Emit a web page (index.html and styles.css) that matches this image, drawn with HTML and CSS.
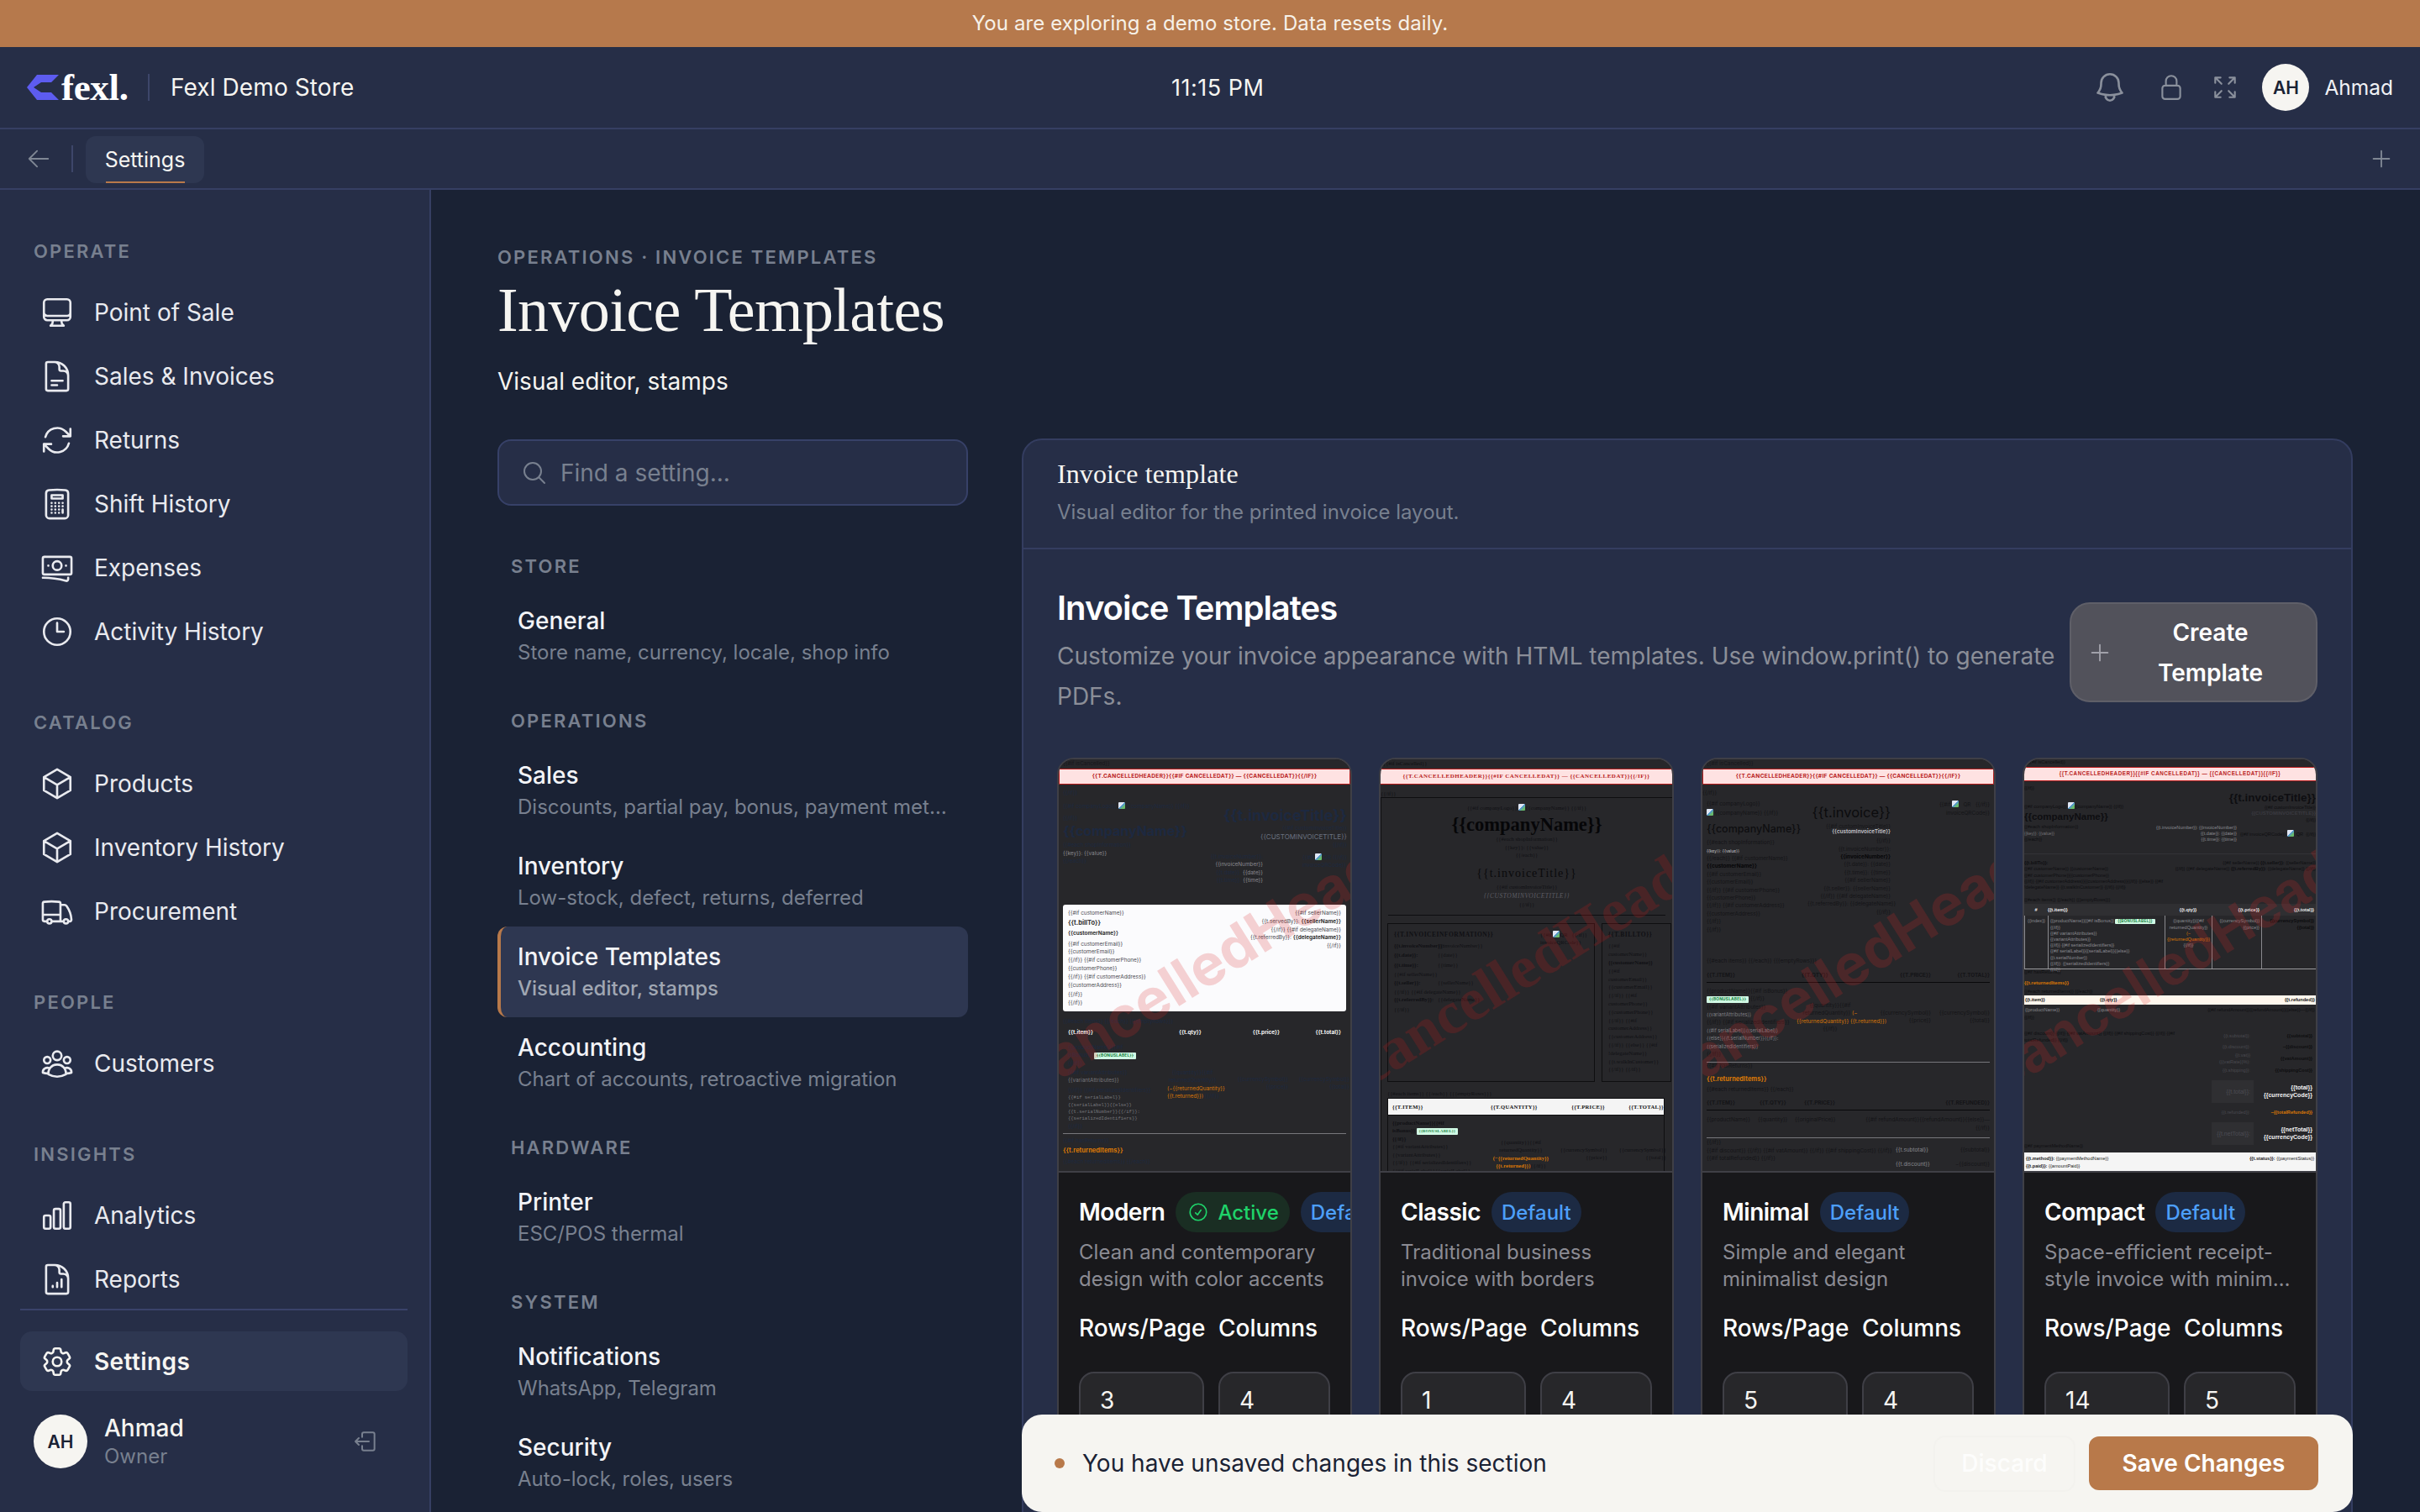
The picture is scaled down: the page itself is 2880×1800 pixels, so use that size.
FILE: index.html
```html
<!DOCTYPE html>
<html lang="en">
  <head>
    <meta charset="UTF-8" />
    <title>Invoice Templates - Fexl Demo Store</title>
    <link rel="stylesheet" href="styles.css">
  </head>
  <body>
    <div class="banner">You are exploring a demo store. Data resets daily.</div>

    <header class="topbar">
      <div class="brand">
        <svg class="brand-mark" viewBox="0 0 38 30"><path d="M12 0h26l-9 9H17l-9 6 9 6h12l9 9H12L0 15z" fill="#5d5cf0"/><path d="M9 15l7-4h13l-4 4z" fill="#262e47"/></svg>
        <span class="brand-name">fexl.</span>
      </div>
      <div class="store">Fexl Demo Store</div>
      <div class="clock">11:15 PM</div>
      <div class="top-actions">
        <svg class="ico bell" viewBox="0 0 24 24"><path d="M14.857 17.082a23.848 23.848 0 0 0 5.454-1.31A8.967 8.967 0 0 1 18 9.75V9A6 6 0 0 0 6 9v.75a8.967 8.967 0 0 1-2.312 6.022c1.733.64 3.56 1.085 5.455 1.31m5.714 0a24.255 24.255 0 0 1-5.714 0m5.714 0a3 3 0 1 1-5.714 0"/></svg>
        <svg class="ico lock" viewBox="0 0 24 24"><path d="M16.5 10.5V6.75a4.5 4.5 0 1 0-9 0v3.75m-.75 11.25h10.5a2.25 2.25 0 0 0 2.25-2.25v-6.75a2.25 2.25 0 0 0-2.25-2.25H6.75a2.25 2.25 0 0 0-2.25 2.25v6.75a2.25 2.25 0 0 0 2.25 2.25Z"/></svg>
        <svg class="ico expand" viewBox="0 0 24 24"><path d="M3.75 3.75v4.5m0-4.5h4.5m-4.5 0L9 9M3.75 20.25v-4.5m0 4.5h4.5m-4.5 0L9 15M20.25 3.75h-4.5m4.5 0v4.5m0-4.5L15 9m5.25 11.25h-4.5m4.5 0v-4.5m0 4.5L15 15"/></svg>
        <div class="avatar">AH</div>
        <span class="user-name">Ahmad</span>
      </div>
    </header>

    <div class="tabbar">
      <svg class="ico tab-back" viewBox="0 0 24 24"><path d="M10.5 19.5 3 12m0 0 7.5-7.5M3 12h18"/></svg>
      <span class="tab-sep"></span>
      <div class="tab">Settings</div>
      <svg class="ico tab-add" viewBox="0 0 24 24"><path d="M12 4.5v15m7.5-7.5h-15"/></svg>
    </div>

    <div class="shell">
      <aside class="sidebar">
        <nav class="side-nav">
          <div class="side-label">OPERATE</div>
          <a class="side-item"><svg class="ico" viewBox="0 0 24 24"><path d="M9 17.25v1.007a3 3 0 0 1-.879 2.122L7.5 21h9l-.621-.621A3 3 0 0 1 15 18.257V17.25m6-12V15a2.25 2.25 0 0 1-2.25 2.25H5.25A2.25 2.25 0 0 1 3 15V5.25m18 0A2.25 2.25 0 0 0 18.75 3H5.25A2.25 2.25 0 0 0 3 5.25m18 0V12a2.25 2.25 0 0 1-2.25 2.25H5.25A2.25 2.25 0 0 1 3 12V5.25"/></svg>Point of Sale</a>
          <a class="side-item"><svg class="ico" viewBox="0 0 24 24"><path d="M19.5 14.25v-2.625a3.375 3.375 0 0 0-3.375-3.375h-1.5A1.125 1.125 0 0 1 13.5 7.125v-1.5a3.375 3.375 0 0 0-3.375-3.375H8.25m0 12.75h7.5m-7.5 3H12M10.5 2.25H5.625c-.621 0-1.125.504-1.125 1.125v17.25c0 .621.504 1.125 1.125 1.125h12.75c.621 0 1.125-.504 1.125-1.125V11.25a9 9 0 0 0-9-9Z"/></svg>Sales &amp; Invoices</a>
          <a class="side-item"><svg class="ico" viewBox="0 0 24 24"><path d="M16.023 9.348h4.992v-.001M2.985 19.644v-4.992m0 0h4.992m-4.993 0 3.181 3.183a8.25 8.25 0 0 0 13.803-3.7M4.031 9.865a8.25 8.25 0 0 1 13.803-3.7l3.181 3.182m0-4.991v4.99"/></svg>Returns</a>
          <a class="side-item"><svg class="ico" viewBox="0 0 24 24"><path d="M15.75 15.75V18m-7.5-6.75h.008v.008H8.25v-.008Zm0 2.25h.008v.008H8.25V13.5Zm0 2.25h.008v.008H8.25v-.008Zm0 2.25h.008v.008H8.25V18Zm2.498-6.75h.007v.008h-.007v-.008Zm0 2.25h.007v.008h-.007V13.5Zm0 2.25h.007v.008h-.007v-.008Zm0 2.25h.007v.008h-.007V18Zm2.504-6.75h.008v.008h-.008v-.008Zm0 2.25h.008v.008h-.008V13.5Zm0 2.25h.008v.008h-.008v-.008Zm0 2.25h.008v.008h-.008V18Zm2.498-6.75h.008v.008h-.008v-.008Zm0 2.25h.008v.008h-.008V13.5ZM8.25 6h7.5v2.25h-7.5V6ZM12 2.25c-1.892 0-3.758.11-5.593.322C5.307 2.7 4.5 3.65 4.5 4.757V19.5a2.25 2.25 0 0 0 2.25 2.25h10.5a2.25 2.25 0 0 0 2.25-2.25V4.757c0-1.108-.806-2.057-1.907-2.185A48.507 48.507 0 0 0 12 2.25Z"/></svg>Shift History</a>
          <a class="side-item"><svg class="ico" viewBox="0 0 24 24"><path d="M2.25 18.75a60.07 60.07 0 0 1 15.797 2.101c.727.198 1.453-.342 1.453-1.096V18.75M3.750 4.5h16.875c.621 0 1.125.504 1.125 1.125v9.75c0 .621-.504 1.125-1.125 1.125H3.375a1.125 1.125 0 0 1-1.125-1.125v-9.75C2.250 5.004 2.754 4.5 3.375 4.5M15 10.5a3 3 0 1 1-6 0 3 3 0 0 1 6 0Zm3 0h.008v.008H18V10.5Zm-12 0h.008v.008H6V10.5Z"/></svg>Expenses</a>
          <a class="side-item"><svg class="ico" viewBox="0 0 24 24"><path d="M12 6v6h4.5m4.5 0a9 9 0 1 1-18 0 9 9 0 0 1 18 0Z"/></svg>Activity History</a>

          <div class="side-label">CATALOG</div>
          <a class="side-item"><svg class="ico" viewBox="0 0 24 24"><path d="m21 7.5-9-5.25L3 7.5m18 0-9 5.25m9-5.25v9l-9 5.25M3 7.5l9 5.25M3 7.5v9l9 5.25m0-9v9"/></svg>Products</a>
          <a class="side-item"><svg class="ico" viewBox="0 0 24 24"><path d="m21 7.5-9-5.25L3 7.5m18 0-9 5.25m9-5.25v9l-9 5.25M3 7.5l9 5.25M3 7.5v9l9 5.25m0-9v9"/></svg>Inventory History</a>
          <a class="side-item"><svg class="ico" viewBox="0 0 24 24"><path d="M8.25 18.75a1.5 1.5 0 0 1-3 0m3 0a1.5 1.5 0 0 0-3 0m3 0h6m-9 0H3.375a1.125 1.125 0 0 1-1.125-1.125V14.25m17.25 4.5a1.5 1.5 0 0 1-3 0m3 0a1.5 1.5 0 0 0-3 0m3 0h1.125c.621 0 1.129-.504 1.09-1.124a17.902 17.902 0 0 0-3.213-9.193 2.056 2.056 0 0 0-1.58-.86H14.25M16.5 18.75h-2.25m0-11.177v-.958c0-.568-.422-1.048-.987-1.106a48.554 48.554 0 0 0-10.026 0 1.106 1.106 0 0 0-.987 1.106v7.635m12-6.677v6.677m0 4.5v-4.5m0 0h-12"/></svg>Procurement</a>

          <div class="side-label">PEOPLE</div>
          <a class="side-item"><svg class="ico" viewBox="0 0 24 24"><path d="M18 18.72a9.094 9.094 0 0 0 3.741-.479 3 3 0 0 0-4.682-2.72m.94 3.198.001.031c0 .225-.012.447-.037.666A11.944 11.944 0 0 1 12 21c-2.17 0-4.207-.576-5.963-1.584A6.062 6.062 0 0 1 6 18.719m12 0a5.971 5.971 0 0 0-.941-3.197m0 0A5.995 5.995 0 0 0 12 12.75a5.995 5.995 0 0 0-5.058 2.772m0 0a3 3 0 0 0-4.681 2.72 8.986 8.986 0 0 0 3.74.477m.94-3.197a5.971 5.971 0 0 0-.94 3.197M15 6.75a3 3 0 1 1-6 0 3 3 0 0 1 6 0Zm6 3a2.25 2.25 0 1 1-4.5 0 2.25 2.25 0 0 1 4.5 0Zm-13.5 0a2.25 2.25 0 1 1-4.5 0 2.25 2.25 0 0 1 4.5 0Z"/></svg>Customers</a>

          <div class="side-label">INSIGHTS</div>
          <a class="side-item"><svg class="ico" viewBox="0 0 24 24"><path d="M3 13.125C3 12.504 3.504 12 4.125 12h2.25c.621 0 1.125.504 1.125 1.125v6.75C7.5 20.496 6.996 21 6.375 21h-2.25A1.125 1.125 0 0 1 3 19.875v-6.75ZM9.75 8.625c0-.621.504-1.125 1.125-1.125h2.25c.621 0 1.125.504 1.125 1.125v11.25c0 .621-.504 1.125-1.125 1.125h-2.25a1.125 1.125 0 0 1-1.125-1.125V8.625ZM16.5 4.125c0-.621.504-1.125 1.125-1.125h2.25C20.496 3 21 3.504 21 4.125v15.75c0 .621-.504 1.125-1.125 1.125h-2.25a1.125 1.125 0 0 1-1.125-1.125V4.125Z"/></svg>Analytics</a>
          <a class="side-item"><svg class="ico" viewBox="0 0 24 24"><path d="M19.5 14.25v-2.625a3.375 3.375 0 0 0-3.375-3.375h-1.5A1.125 1.125 0 0 1 13.5 7.125v-1.5a3.375 3.375 0 0 0-3.375-3.375H8.25M9 16.5v.75m3-3v3M15 12v5.25m-4.5-15H5.625c-.621 0-1.125.504-1.125 1.125v17.25c0 .621.504 1.125 1.125 1.125h12.75c.621 0 1.125-.504 1.125-1.125V11.25a9 9 0 0 0-9-9Z"/></svg>Reports</a>
        </nav>
        <div class="side-foot">
          <a class="side-item active"><svg class="ico" viewBox="0 0 24 24"><path d="M9.594 3.94c.09-.542.56-.94 1.11-.94h2.593c.55 0 1.02.398 1.11.94l.213 1.281c.063.374.313.686.645.87.074.04.147.083.22.127.325.196.72.257 1.075.124l1.217-.456a1.125 1.125 0 0 1 1.37.49l1.296 2.247a1.125 1.125 0 0 1-.26 1.431l-1.003.827c-.293.241-.438.613-.43.992a7.723 7.723 0 0 1 0 .255c-.008.378.137.75.43.991l1.004.827c.424.35.534.955.26 1.43l-1.298 2.247a1.125 1.125 0 0 1-1.369.491l-1.217-.456c-.355-.133-.75-.072-1.076.124a6.47 6.47 0 0 1-.22.128c-.331.183-.581.495-.644.869l-.213 1.281c-.09.543-.56.94-1.11.94h-2.594c-.55 0-1.019-.398-1.11-.94l-.213-1.281c-.062-.374-.312-.686-.644-.87a6.52 6.52 0 0 1-.22-.127c-.325-.196-.72-.257-1.076-.124l-1.217.456a1.125 1.125 0 0 1-1.369-.49l-1.297-2.247a1.125 1.125 0 0 1 .26-1.431l1.004-.827c.292-.24.437-.613.43-.991a6.932 6.932 0 0 1 0-.255c.007-.38-.138-.751-.43-.992l-1.004-.827a1.125 1.125 0 0 1-.26-1.43l1.297-2.247a1.125 1.125 0 0 1 1.37-.491l1.216.456c.356.133.751.072 1.076-.124.072-.044.146-.086.22-.128.332-.183.582-.495.644-.869l.214-1.28Z"/><path d="M15 12a3 3 0 1 1-6 0 3 3 0 0 1 6 0Z"/></svg>Settings</a>
          <div class="side-user">
            <div class="avatar big">AH</div>
            <div class="side-user-text">
              <div class="side-user-name">Ahmad</div>
              <div class="side-user-role">Owner</div>
            </div>
            <svg class="ico logout" viewBox="0 0 24 24"><path d="M9 8V5.5A1.5 1.5 0 0 1 10.5 4h8A1.5 1.5 0 0 1 20 5.5v13a1.5 1.5 0 0 1-1.5 1.5h-8A1.5 1.5 0 0 1 9 18.500V16M15 12H3m0 0 3-3m-3 3 3 3"/></svg>
          </div>
        </div>
      </aside>

      <main class="main">
        <div class="crumb">OPERATIONS · INVOICE TEMPLATES</div>
        <h1 class="title">Invoice Templates</h1>
        <p class="subtitle">Visual editor, stamps</p>

        <div class="settings">
          <div class="menu">
            <div class="search">
              <svg class="ico" viewBox="0 0 24 24"><path d="m21 21-5.197-5.197m0 0A7.5 7.5 0 1 0 5.196 5.196a7.5 7.5 0 0 0 10.607 10.607Z"/></svg>
              <span>Find a setting...</span>
            </div>
            <div class="menu-label first">STORE</div>
            <a class="menu-item"><b>General</b><span>Store name, currency, locale, shop info</span></a>
            <div class="menu-label">OPERATIONS</div>
            <a class="menu-item"><b>Sales</b><span>Discounts, partial pay, bonus, payment methods and more</span></a>
            <a class="menu-item"><b>Inventory</b><span>Low-stock, defect, returns, deferred</span></a>
            <a class="menu-item active"><b>Invoice Templates</b><span>Visual editor, stamps</span></a>
            <a class="menu-item"><b>Accounting</b><span>Chart of accounts, retroactive migration</span></a>
            <div class="menu-label">HARDWARE</div>
            <a class="menu-item"><b>Printer</b><span>ESC/POS thermal</span></a>
            <div class="menu-label">SYSTEM</div>
            <a class="menu-item"><b>Notifications</b><span>WhatsApp, Telegram</span></a>
            <a class="menu-item"><b>Security</b><span>Auto-lock, roles, users</span></a>
          </div>

          <section class="panel">
            <div class="panel-head">
              <h3>Invoice template</h3>
              <p>Visual editor for the printed invoice layout.</p>
            </div>
            <div class="panel-body">
              <div class="tpl-head">
                <div class="tpl-head-text">
                  <h2>Invoice Templates</h2>
                  <p>Customize your invoice appearance with HTML templates. Use window.print() to generate PDFs.</p>
                </div>
                <button class="create">
                  <svg class="ico" viewBox="0 0 24 24"><path d="M12 4.5v15m7.5-7.5h-15"/></svg>
                  <span>Create Template</span>
                </button>
              </div>

              <div class="cards">
                <!-- modern -->
                <article class="card">
                  <div class="pv pv-modern">
                    <div class="pv-if">{{#if isCancelled}}</div>
                    <div class="pv-cancel">{{T.CANCELLEDHEADER}}{{#IF CANCELLEDAT}} — {{CANCELLEDAT}}{{/IF}}</div>
                    <div class="m-head">
                      <div class="m-left">
                        <p>{{/if}}</p>
                        <p class="m-logo">{{#if companyLogo}} <i class="broken"></i> {{companyName}} {{/if}}</p>
                        <p>{{/if}}</p>
                        <p class="m-company">{{companyName}}</p>
                        <p>{{#each shopInformation}}</p>
                        <p class="grey">{{key}}: {{value}}</p>
                        <p>{{/each}}</p>
                      </div>
                      <div class="m-right">
                        <p class="m-title">{{t.invoiceTitle}}</p>
                        <p>{{#if customInvoiceTitle}}</p>
                        <p class="m-custom">{{CUSTOMINVOICETITLE}}</p>
                        <p>{{/if}}</p>
                        <div class="m-info">
                          <div class="m-lines">
                            <p>{{t.invoiceNumber}}:</p>
                            <p class="grey">{{invoiceNumber}}</p>
                            <p>{{t.date}}: <span class="grey">{{date}}</span></p>
                            <p>{{t.time}}: <span class="grey">{{time}}</span></p>
                          </div>
                          <div class="m-qr">
                            <p>{{#if <i class="broken"></i> QR {{/if}}</p>
                            <p>invoiceQRCode}}</p>
                          </div>
                        </div>
                      </div>
                    </div>
                    <div class="m-box">
                      <div>
                        <p>{{#if customerName}}</p>
                        <p class="m-billto">{{t.billTo}}</p>
                        <p class="m-name">{{customerName}}</p>
                        <p>{{#if customerEmail}}</p>
                        <p>{{customerEmail}}</p>
                        <p>{{/if}} {{#if customerPhone}}</p>
                        <p>{{customerPhone}}</p>
                        <p>{{/if}} {{#if customerAddress}}</p>
                        <p>{{customerAddress}}</p>
                        <p class="m-gap">{{/if}}</p>
                        <p>{{/if}}</p>
                      </div>
                      <div class="m-box-right">
                        <p>{{#if sellerName}}</p>
                        <p>{{t.servedBy}}: <b>{{sellerName}}</b></p>
                        <p>{{/if}} {{#if delegateName}}</p>
                        <p>{{t.referredBy}}: <b>{{delegateName}}</b></p>
                        <p>{{/if}}</p>
                      </div>
                    </div>
                    <p class="m-each">{{#each items}} {{/each}} {{{emptyRows}}}</p>
                    <div class="m-th"><span>{{t.item}}</span><span>{{t.qty}}</span><span>{{t.price}}</span><span>{{t.total}}</span></div>
                    <div class="m-row">
                      <div class="m-prod">
                        <p>{{productName}}{{#if</p>
                        <p>isBonus}} <i class="bonus">{{BONUSLABEL}}</i></p>
                        <p>{{/if}}</p>
                        <p class="m-vgap">{{#if variantAttributes}}</p>
                        <p class="grey">{{variantAttributes}}</p>
                        <p class="m-vgap">{{/if}} {{#if serializedIdentifiers}}</p>
                        <p class="mono">{{#if serialLabel}}</p>
                        <p class="mono">{{serialLabel}}{{else}}</p>
                        <p class="mono">{{t.serialNumber}}{{/if}}:</p>
                        <p class="mono">{{serializedIdentifiers}}</p>
                        <p>{{/if}}</p>
                      </div>
                      <div class="m-qty">
                        <p>{{quantity}}{{#if</p>
                        <p>returnedQuantity}}</p>
                        <p class="orange">(−{{returnedQuantity}}</p>
                        <p class="orange">{{t.returned}}) <span class="dk">{{/if}}</span></p>
                      </div>
                      <div class="m-cur"><p>{{currencySymbol}}</p><p>{{price}}</p></div>
                      <div class="m-cur"><p>{{currencySymbol}}</p><p>{{total}}</p></div>
                    </div>
                    <div class="m-rule"></div>
                    <p class="m-each2">{{#if hasReturns}}</p>
                    <p class="m-returned">{{t.returnedItems}}</p>
                    <p class="m-each2">{{#each returnedItems}} {{/each}}</p>
                    <div class="wm">{{t.cancelledHeader}}</div>
                  </div>
                  <div class="card-body">
                    <div class="card-name"><b>Modern</b><span class="pill green"><svg class="ico" viewBox="0 0 24 24"><path d="M9 12.75 11.25 15 15 9.75M21 12a9 9 0 1 1-18 0 9 9 0 0 1 18 0Z"/></svg>Active</span><span class="pill blue">Default</span></div>
                    <p class="card-desc">Clean and contemporary design with color accents</p>
                    <div class="fields">
                      <div class="field"><label>Rows/Page</label><div class="num">3</div></div>
                      <div class="field"><label>Columns</label><div class="num">4</div></div>
                    </div>
                  </div>
                </article>

                <!-- classic -->
                <article class="card">
                  <div class="pv pv-classic">
                    <div class="pv-if">{{#if isCancelled}}</div>
                    <div class="pv-cancel">{{T.CANCELLEDHEADER}}{{#IF CANCELLEDAT}} — {{CANCELLEDAT}}{{/IF}}</div>
                    <p class="c-endif">{{/if}}</p>
                    <div class="c-frame">
                      <div class="c-top">
                        <p>{{#if companyLogo}} <i class="broken"></i>{{companyName}} {{/if}}</p>
                        <p class="c-company">{{companyName}}</p>
                        <p>{{#each shopInformation}}</p>
                        <p>{{key}}: {{value}}</p>
                        <p>{{/each}}</p>
                        <p class="c-title">{{t.invoiceTitle}}</p>
                        <p>{{#if customInvoiceTitle}}</p>
                        <p class="c-custom">{{CUSTOMINVOICETITLE}}</p>
                        <p>{{/if}}</p>
                      </div>
                      <div class="c-hr"></div>
                      <div class="c-boxes">
                        <div class="c-box c-info">
                          <div class="c-info-l">
                            <p class="c-h">{{T.INVOICEINFORMATION}}</p>
                            <p class="c-kv"><b>{{t.invoiceNumber}}:</b><span>{{invoiceNumber}}</span></p>
                            <p class="c-kv"><b>{{t.date}}:</b><span>{{date}}</span></p>
                            <p class="c-kv"><b>{{t.time}}:</b><span>{{time}}</span></p>
                            <p class="c-sp">{{#if sellerName}}</p>
                            <p class="c-kv"><b>{{t.seller}}:</b><span>{{sellerName}}</span></p>
                            <p class="c-sp">{{/if}} {{#if delegateName}}</p>
                            <p class="c-kv"><b>{{t.referredBy}}:</b><span>{{delegateName}}</span></p>
                            <p class="c-sp">{{/if}}</p>
                          </div>
                          <div class="c-info-r">
                            <p>{{#if <i class="broken"></i>QR &nbsp; {{/if}}</p>
                            <p>invoiceQRCode}}</p>
                          </div>
                        </div>
                        <div class="c-box c-bill">
                          <p class="c-h">{{T.BILLTO}}</p>
                          <p>{{#if</p><p>customerName}}</p>
                          <p><b>{{customerName}}</b></p>
                          <p>{{#if</p><p>customerEmail}}</p>
                          <p>{{customerEmail}}</p>
                          <p>{{/if}} {{#if</p><p>customerPhone}}</p>
                          <p>{{customerPhone}}</p>
                          <p>{{/if}} {{#if</p><p>customerAddress}}</p>
                          <p>{{customerAddress}}</p>
                          <p>{{/if}} {{else}} {{#if</p><p>!delegateName}}</p>
                          <p>{{t.walkInCustomer}}</p>
                          <p>{{/if}} {{/if}}</p>
                        </div>
                      </div>
                      <p class="c-each">{{#each items}} {{/each}} {{{emptyRows}}}</p>
                      <div class="c-table">
                        <div class="c-th"><span>{{T.ITEM}}</span><span>{{T.QUANTITY}}</span><span>{{T.PRICE}}</span><span>{{T.TOTAL}}</span></div>
                        <div class="c-td">
                          <div>
                            <p><b>{{productName}}{{#if</b></p>
                            <p><b>isBonus}}</b> <i class="bonus">{{BONUSLABEL}}</i></p>
                            <p><b>{{/if}}</b></p>
                            <p>{{#if variantAttributes}}</p>
                            <p>{{variantAttributes}}</p>
                            <p>{{/if}} {{#if serializedIdentifiers}}</p>
                            <p>{{#if serialLabel}}{{serialLabel}}</p>
                          </div>
                          <div class="c-q">
                            <p class="c-qt">{{quantity}}{{#if</p>
                            <p>returnedQuantity}}</p>
                            <p class="orange"><b>(−{{returnedQuantity}}</b></p>
                            <p><span class="orange"><b>{{t.returned}})</b></span>{{/if}}</p>
                          </div>
                          <div class="c-p"><p>{{currencySymbol}}</p><p>{{price}}</p></div>
                          <div class="c-p"><p>{{currencySymbol}}</p><p>{{total}}</p></div>
                        </div>
                      </div>
                    </div>
                    <div class="wm">{{t.cancelledHeader}}</div>
                  </div>
                  <div class="card-body">
                    <div class="card-name"><b>Classic</b><span class="pill blue">Default</span></div>
                    <p class="card-desc">Traditional business invoice with borders</p>
                    <div class="fields">
                      <div class="field"><label>Rows/Page</label><div class="num">1</div></div>
                      <div class="field"><label>Columns</label><div class="num">4</div></div>
                    </div>
                  </div>
                </article>

                <!-- minimal -->
                <article class="card">
                  <div class="pv pv-minimal">
                    <div class="pv-if">{{#if isCancelled}}</div>
                    <div class="pv-cancel">{{T.CANCELLEDHEADER}}{{#IF CANCELLEDAT}} — {{CANCELLEDAT}}{{/IF}}</div>
                    <p class="n-endif">{{/if}}</p>
                    <div class="n-head">
                      <div class="n-left">
                        <p>{{#if companyLogo}}</p>
                        <p><i class="broken"></i> {{companyName}} {{/if}}</p>
                        <p class="n-company">{{companyName}}</p>
                        <p>{{#each shopInformation}}</p>
                        <p class="n-kv">{{key}}: {{value}}</p>
                        <p>{{/each}} {{#if customerName}}</p>
                        <p><b class="blk">{{customerName}}</b></p>
                        <p>{{#if customerEmail}}</p>
                        <p>{{customerEmail}}</p>
                        <p>{{/if}} {{#if customerPhone}}</p>
                        <p>{{customerPhone}}</p>
                        <p>{{/if}} {{#if customerAddress}}</p>
                        <p>{{customerAddress}}</p>
                        <p>{{/if}}</p>
                        <p>{{/if}}</p>
                      </div>
                      <div class="n-mid">
                        <p class="n-title">{{t.invoice}}</p>
                        <p class="n-cif">{{#if customInvoiceTitle}}</p>
                        <p class="n-custom">{{customInvoiceTitle}}</p>
                        <p class="n-cend">{{/if}}</p>
                        <p>{{t.invoiceNumber}}:</p>
                        <p><b class="blk">{{invoiceNumber}}</b></p>
                        <p>{{t.date}}: {{date}}</p>
                        <p>{{t.time}}: {{time}}</p>
                        <p>{{#if sellerName}}</p>
                        <p>{{t.seller}}: {{sellerName}}</p>
                        <p>{{/if}} {{#if delegateName}}</p>
                        <p>{{t.referredBy}}: {{delegateName}}</p>
                        <p>{{/if}}</p>
                      </div>
                      <div class="n-qr">
                        <p>{{#if <i class="broken"></i> &nbsp; QR &nbsp; {{/if}}</p>
                        <p>invoiceQRCode}}</p>
                      </div>
                    </div>
                    <p class="n-each">{{#each items}} {{/each}} {{{emptyRows}}}</p>
                    <div class="n-th"><span>{{T.ITEM}}</span><span>{{T.QTY}}</span><span>{{T.PRICE}}</span><span>{{T.TOTAL}}</span></div>
                    <div class="n-row">
                      <div class="n-prod">
                        <p>{{productName}}{{#if isBonus}}</p>
                        <p><i class="bonus">{{BONUSLABEL}}</i> {{/if}}</p>
                        <p>{{#if variantAttributes}}</p>
                        <p class="n-grey">{{variantAttributes}}</p>
                        <p>{{/if}} {{#if serializedIdentifiers}}</p>
                        <p class="n-grey">{{#if serialLabel}}{{serialLabel}}</p>
                        <p class="n-grey">{{else}}{{t.serialNumber}}{{/if}}:</p>
                        <p class="n-grey">{{serializedIdentifiers}}</p>
                        <p>{{/if}}</p>
                      </div>
                      <div class="n-q">
                        <p>{{quantity}}{{#if</p>
                        <p>returnedQuantity}} <span class="orange">(−</span></p>
                        <p class="orange">{{returnedQuantity}} {{t.returned}})</p>
                        <p>{{/if}}</p>
                      </div>
                      <div class="n-p"><p>{{currencySymbol}}</p><p>{{price}}</p></div>
                      <div class="n-p"><p>{{currencySymbol}}</p><p>{{total}}</p></div>
                    </div>
                    <div class="n-rule"></div>
                    <p class="n-if">{{#if hasReturns}}</p>
                    <p class="n-returned">{{t.returnedItems}}</p>
                    <p class="n-if2">{{#each returnedItems}} {{/each}}</p>
                    <div class="n-th n-th2"><span>{{T.ITEM}}</span><span>{{T.QTY}}</span><span>{{T.PRICE}}</span><span>{{T.REFUNDED}}</span></div>
                    <div class="n-rrow"><span>{{productName}}</span><span>{{quantity}}</span><span>{{originalPrice}}</span><span>{{#if refundAmount}}{{refundAmount}}{{else}}—{{/if}}</span></div>
                    <div class="n-rule n-rule2"></div>
                    <div class="n-foot">
                      <div>
                        <p>{{/if}}</p>
                        <p>{{#if discount}} {{/if}} {{#if vatAmount}} {{/if}} {{#if shippingCost}} {{/if}}</p>
                        <p>{{#if totalRefunded}} {{/if}}</p>
                      </div>
                      <div class="n-totals">
                        <p><span class="grey">{{t.subtotal}}</span><span>{{subtotal}}</span></p>
                        <p><span class="grey">{{t.discount}}</span><span>−{{discount}}</span></p>
                      </div>
                    </div>
                    <div class="wm">{{t.cancelledHeader}}</div>
                  </div>
                  <div class="card-body">
                    <div class="card-name"><b>Minimal</b><span class="pill blue">Default</span></div>
                    <p class="card-desc">Simple and elegant minimalist design</p>
                    <div class="fields">
                      <div class="field"><label>Rows/Page</label><div class="num">5</div></div>
                      <div class="field"><label>Columns</label><div class="num">4</div></div>
                    </div>
                  </div>
                </article>

                <!-- compact -->
                <article class="card">
                  <div class="pv pv-compact">
                    <div class="k-if">{{#if isCancelled}}</div>
                    <div class="pv-cancel">{{T.CANCELLEDHEADER}}{{#IF CANCELLEDAT}} — {{CANCELLEDAT}}{{/IF}}</div>
                    <p class="k-endif">{{/if}}</p>
                    <div class="k-head">
                      <div>
                        <p>{{#if companyLogo}} <i class="broken"></i>{{companyName}} {{/if}}</p>
                        <p class="k-company">{{companyName}}</p>
                        <p>{{#each shopInformation}}</p>
                        <p class="k-sm">{{key}}: {{value}}</p>
                        <p>{{/each}}</p>
                      </div>
                      <div class="k-right">
                        <p class="k-title">{{t.invoiceTitle}}</p>
                        <p>{{#if customInvoiceTitle}}</p>
                        <p class="k-custom">{{CUSTOMINVOICETITLE}}</p>
                        <p>{{/if}}</p>
                        <div class="k-info">
                          <div class="k-lines grey"><p>{{t.invoiceNumber}}: {{invoiceNumber}}</p><p>{{t.date}}: {{date}}</p><p>{{t.time}}: {{time}}</p></div>
                          <p>{{#if invoiceQRCode}} <i class="broken"></i> &nbsp;QR&nbsp; {{/if}}</p>
                        </div>
                      </div>
                    </div>
                    <div class="k-hr"></div>
                    <div class="k-bill">
                      <div>
                        <p><b>{{t.billTo}}:</b></p>
                        <p>{{#if customerName}} {{customerName}}</p>
                        <p>{{#if customerPhone}}{{customerPhone}}</p>
                        <p>{{/if}} {{#if customerAddress}}{{customerAddress}}{{/if}} {{else}} {{#if</p>
                        <p>!delegateName}} {{t.walkInCustomer}} {{/if}} {{/if}}</p>
                      </div>
                      <div class="k-bill-r">
                        <p>{{#if sellerName}} <b>{{t.seller}}:</b> {{sellerName}}</p>
                        <p>{{/if}} {{#if delegateName}} <b>{{t.referredBy}}:</b> {{delegateName}} {{/if}}</p>
                      </div>
                    </div>
                    <p class="k-each">{{#each items}} {{/each}} {{{emptyRows}}}</p>
                    <div class="k-table">
                      <div class="k-th"><span class="ctr">#</span><span>{{t.item}}</span><span class="ctr">{{t.qty}}</span><span class="rgt">{{t.price}}</span><span class="rgt">{{t.total}}</span></div>
                      <div class="k-td">
                        <span class="ctr grey">{{index}}</span>
                        <span class="grey"><em>{{productName}}{{#if isBonus}}</em> <i class="bonus">{{BONUSLABEL}}</i><br>{{/if}}<br>{{#if variantAttributes}}<br>{{variantAttributes}}<br>{{/if}} {{#if serializedIdentifiers}}<br>{{#if serialLabel}}{{serialLabel}}{{else}}{{t.serialNumber}}<br>{{/if}}: {{serializedIdentifiers}}<br>{{/if}}</span>
                        <span class="ctr grey">{{quantity}}{{#if returnedQuantity}}<br><em class="orange">(−{{returnedQuantity}})</em><br>{{/if}}</span>
                        <span class="rgt grey">{{currencySymbol}}<br>{{price}}</span>
                        <span class="rgt k-strong">{{currencySymbol}}<br>{{total}}</span>
                      </div>
                    </div>
                    <p class="k-ret-if">{{#if hasReturns}}</p>
                    <p class="k-returned">{{t.returnedItems}}</p>
                    <p class="k-ret-each">{{#each returnedItems}} {{/each}}</p>
                    <div class="k-rth"><span>{{t.item}}</span><span>{{t.qty}}</span><span>{{t.refunded}}</span></div>
                    <div class="k-rtd"><span class="grey">{{productName}}</span><span class="grey">{{quantity}}</span><span>{{#if refundAmount}}{{refundAmount}}{{else}}—{{/if}}</span></div>
                    <p class="k-end">{{/if}}</p>
                    <div class="k-foot">
                      <div class="k-notes"><p>{{#if discount}} {{/if}} {{#if vatAmount}} {{/if}} {{#if shippingCost}} {{/if}} {{#if</p><p>totalRefunded}} {{/if}}</p></div>
                      <div class="k-totals">
                        <div class="k-tr"><span>{{t.subtotal}}:</span><b>{{subtotal}}</b></div>
                        <div class="k-tr"><span>{{t.discount}}:</span><b>−{{discount}}</b></div>
                        <div class="k-tr"><span>{{t.vat}}<br>({{vatRate}}%):</span><b>{{vatAmount}}</b></div>
                        <div class="k-tr"><span>{{t.shipping}}:</span><b>{{shippingCost}}</b></div>
                        <div class="k-tr k-big"><span>{{t.total}}:</span><b>{{total}}<br>{{currencyCode}}</b></div>
                        <div class="k-tr"><span>{{t.refunded}}:</span><b class="orange">−{{totalRefunded}}</b></div>
                        <div class="k-tr k-big"><span>{{t.netTotal}}:</span><b>{{netTotal}}<br>{{currencyCode}}</b></div>
                      </div>
                    </div>
                    <p class="k-pay-if">{{#if paymentMethodName}}</p>
                    <div class="k-pay">
                      <div><p><b>{{t.method}}:</b> {{paymentMethodName}}</p><p><b>{{t.paid}}:</b> {{amountPaid}}</p></div>
                      <p><b>{{t.status}}:</b> {{paymentStatus}}</p>
                    </div>
                    <div class="wm">{{t.cancelledHeader}}</div>
                  </div>
                  <div class="card-body">
                    <div class="card-name"><b>Compact</b><span class="pill blue">Default</span></div>
                    <p class="card-desc">Space-efficient receipt-style invoice with minimal spacing and margins</p>
                    <div class="fields">
                      <div class="field"><label>Rows/Page</label><div class="num">14</div></div>
                      <div class="field"><label>Columns</label><div class="num">5</div></div>
                    </div>
                  </div>
                </article>
              </div>
            </div>
          </section>
        </div>

        <div class="savebar">
          <span class="dot"></span>
          <span class="save-text">You have unsaved changes in this section</span>
          <button class="discard">Discard</button>
          <button class="save">Save Changes</button>
        </div>
      </main>
    </div>
  </body>
</html>
```

FILE: styles.css
```css
* {
  margin: 0;
  padding: 0;
  box-sizing: border-box;
}
body {
  width: 2880px;
  height: 1800px;
  overflow: hidden;
  display: flex;
  flex-direction: column;
  background: #1a2234;
  color: #f6f5f1;
  font-family: Inter, "Noto Sans", sans-serif;
  font-size: 28px;
}
a {
  color: inherit;
  text-decoration: none;
}
button {
  border: 0;
  font-family: inherit;
  font-size: inherit;
}
.ico {
  flex: none;
  width: 42px;
  height: 42px;
  fill: none;
  stroke: currentColor;
  stroke-width: 1.5;
  stroke-linecap: round;
  stroke-linejoin: round;
}

/* top */
.banner {
  height: 56px;
  line-height: 56px;
  text-align: center;
  background: #b6794c;
  color: #f6f1e8;
  font-size: 24px;
  letter-spacing: 0.1px;
}
.topbar {
  height: 98px;
  display: flex;
  align-items: center;
  position: relative;
  padding: 0 32px;
  background: #262e47;
  border-bottom: 2px solid #363f63;
}
.brand {
  display: flex;
  align-items: center;
  gap: 3px;
  width: 146px;
  height: 32px;
  border-right: 2px solid #3d466a;
}
.brand-mark {
  width: 38px;
  height: 30px;
}
.brand-name {
  font-family: "Liberation Serif", serif;
  font-weight: 700;
  font-size: 45px;
  line-height: 32px;
  letter-spacing: -0.3px;
  color: #fff;
}
.store {
  margin-left: 25px;
  letter-spacing: 0.1px;
}
.clock {
  position: absolute;
  left: 1394px;
  font-size: 27px;
  letter-spacing: 0.5px;
}
.top-actions {
  margin-left: auto;
  display: flex;
  align-items: center;
  color: #8a909c;
}
.bell {
  width: 42px;
  margin-right: 35px;
}
.lock,
.expand {
  width: 34px;
  height: 34px;
}
.lock {
  margin-right: 30px;
}
.expand {
  margin-right: 27px;
}
.avatar {
  width: 56px;
  height: 56px;
  display: flex;
  align-items: center;
  justify-content: center;
  border-radius: 50%;
  background: #f6f5f1;
  color: #1a2234;
  font-size: 21px;
  font-weight: 600;
}
.avatar.big {
  width: 64px;
  height: 64px;
  flex: none;
}
.user-name {
  margin-left: 18px;
  color: #f0f1f5;
  font-size: 24.5px;
}
.tabbar {
  height: 72px;
  flex: none;
  display: flex;
  align-items: center;
  padding: 0 31px;
  background: #262e47;
  border-bottom: 2px solid #363f63;
  color: #7f8794;
}
.tab-back {
  width: 30px;
  height: 30px;
}
.tab-sep {
  width: 2px;
  height: 32px;
  margin: 0 15px 0 24px;
  background: #3d466a;
}
.tab {
  width: 141px;
  height: 56px;
  margin-top: 8px;
  align-self: flex-start;
  display: flex;
  align-items: center;
  justify-content: center;
  position: relative;
  border-radius: 12px;
  background: #2e3751;
  color: #f6f5f1;
  font-size: 25px;
}
.tab::after {
  content: "";
  position: absolute;
  left: 24px;
  right: 23px;
  bottom: 0;
  height: 2px;
  background: #b8794a;
}
.tab-add {
  width: 30px;
  height: 30px;
  margin-left: auto;
}

/* sidebar */
.shell {
  flex: 1;
  min-height: 0;
  display: flex;
}
.sidebar {
  width: 513px;
  flex: none;
  display: flex;
  flex-direction: column;
  padding: 0 26px 0 24px;
  background: #262e47;
  border-right: 2px solid #363f63;
}
.side-nav {
  height: 1334px;
  padding-top: 55px;
  border-bottom: 2px solid #3a436a;
}
.side-label {
  height: 36px;
  line-height: 36px;
  margin: 52px 0 17px 16px;
  color: #78808f;
  font-size: 22px;
  font-weight: 600;
  letter-spacing: 2.2px;
}
.side-label:first-child {
  margin-top: 0;
  margin-bottom: 17px;
}
.side-item {
  height: 76px;
  display: flex;
  align-items: center;
  gap: 23px;
  padding-left: 23px;
  color: #e9eaef;
}
.side-foot {
  padding-top: 25px;
}
.side-item.active {
  height: 71px;
  border-radius: 14px;
  background: #2e3751;
  color: #f6f5f1;
  font-weight: 600;
  letter-spacing: 0.4px;
}
.side-user {
  display: flex;
  align-items: center;
  gap: 20px;
  margin-top: 26px;
  padding-left: 16px;
  color: #78808f;
}
.side-user-text {
  flex: 1;
}
.side-user-name {
  color: #f6f5f1;
  font-weight: 500;
  line-height: 36px;
}
.side-user-role {
  font-size: 24px;
  line-height: 32px;
}
.logout {
  width: 32px;
  height: 32px;
  margin-right: 34px;
}

/* main */
.main {
  flex: 1;
  min-width: 0;
  position: relative;
  overflow: hidden;
  padding: 64px 81px 0 79px;
}
.crumb {
  height: 32px;
  line-height: 32px;
  color: #78808f;
  font-size: 22px;
  font-weight: 600;
  letter-spacing: 2.2px;
}
.title {
  height: 84px;
  line-height: 84px;
  margin-top: 5px;
  font-family: "Liberation Serif", serif;
  font-size: 74px;
  font-weight: 400;
  color: #f6f5f1;
  letter-spacing: -0.6px;
}
.subtitle {
  margin-top: 21px;
  height: 44px;
  line-height: 44px;
}
.settings {
  display: grid;
  grid-template-columns: 560px 1584px;
  gap: 64px;
  margin-top: 47px;
  align-items: start;
}
.search {
  height: 79px;
  display: flex;
  align-items: center;
  gap: 15px;
  padding-left: 26px;
  border: 2px solid #374168;
  border-radius: 16px;
  background: #262e47;
  color: #78808f;
}
.search .ico {
  width: 32px;
  height: 32px;
}
.menu-label {
  height: 32px;
  line-height: 32px;
  margin: 31px 0 13px 16px;
  color: #78808f;
  font-size: 22px;
  font-weight: 600;
  letter-spacing: 2.2px;
}
.menu-label.first {
  margin-top: 56px;
}
.menu-item {
  height: 108px;
  display: flex;
  flex-direction: column;
  justify-content: center;
  gap: 3px;
  padding: 0 24px;
  border-radius: 12px;
  overflow: hidden;
}
.menu-item b {
  font-weight: 500;
  font-size: 28px;
  line-height: 36px;
  color: #f3f4f7;
}
.menu-item span {
  font-size: 24px;
  line-height: 34px;
  color: #78808f;
  white-space: nowrap;
  overflow: hidden;
  text-overflow: ellipsis;
}
.menu-item.active {
  background: #2e3751;
  border-left: 4px solid #b8794a;
  padding-left: 20px;
}
.menu-item.active span {
  color: #a0a7b3;
  font-weight: 500;
}

/* panel */
.panel {
  height: 1400px;
  margin-top: -1px;
  border: 2px solid #343d60;
  border-radius: 24px 24px 0 0;
  background: #262e47;
}
.panel-head {
  height: 130px;
  padding: 18px 40px 0;
  border-bottom: 2px solid #343d60;
}
.panel-head h3 {
  font-family: "Liberation Serif", serif;
  font-size: 32px;
  font-weight: 400;
  line-height: 44px;
  color: #f6f5f1;
  letter-spacing: 0.1px;
}
.panel-head p {
  margin-top: 6px;
  font-size: 24px;
  line-height: 36px;
  color: #78808f;
}
.panel-body {
  padding: 46px 40px 0;
}
.tpl-head {
  display: flex;
  align-items: center;
  gap: 10px;
}
.tpl-head-text {
  flex: 1;
}
.tpl-head h2 {
  font-size: 40px;
  font-weight: 600;
  line-height: 48px;
  letter-spacing: -1px;
  color: #fff;
}
.tpl-head p {
  margin-top: 9px;
  line-height: 48px;
  color: #8b8e98;
}
.create {
  width: 295px;
  height: 119px;
  flex: none;
  display: flex;
  align-items: center;
  padding: 0 39px 0 19px;
  gap: 30px;
  border: 2px solid #5f5f68;
  border-radius: 24px;
  background: #52525b;
  color: #fff;
  font-weight: 600;
  line-height: 48px;
}
.create .ico {
  width: 30px;
  height: 30px;
  stroke: #a1a1aa;
}
.create span {
  flex: 1;
}

/* cards */
.cards {
  display: grid;
  grid-template-columns: repeat(4, 1fr);
  gap: 32px;
  margin-top: 49px;
}
.card {
  height: 900px;
  overflow: hidden;
  border: 2px solid #3f3f46;
  border-radius: 20px 20px 0 0;
  background: #18181b;
}
.card-body {
  padding: 23px 24px 0;
  border-top: 2px solid #3f3f46;
}
.card-name {
  display: flex;
  align-items: center;
  gap: 13px;
  height: 48px;
}
.card-name b {
  font-weight: 600;
  color: #fff;
  letter-spacing: -0.5px;
}
.pill {
  flex: none;
  height: 48px;
  display: flex;
  align-items: center;
  gap: 10px;
  padding: 0 12px;
  border-radius: 24px;
  font-size: 24px;
  font-weight: 500;
}
.pill.green {
  padding: 0 13px 0 14px;
  background: #1a2e23;
  color: #1fd36a;
}
.pill.green .ico {
  width: 26px;
  height: 26px;
}
.pill.blue {
  background: #1c2a43;
  color: #4d9ffa;
}
.card-desc {
  margin-top: 8px;
  height: 64px;
  font-size: 24px;
  line-height: 32px;
  color: #8b8b93;
  display: -webkit-box;
  -webkit-box-orient: vertical;
  -webkit-line-clamp: 2;
  overflow: hidden;
  letter-spacing: 0.05px;
}
.fields {
  display: grid;
  grid-template-columns: 149px 1fr;
  gap: 17px;
  margin-top: 25px;
}
.field label {
  display: block;
  line-height: 34px;
  font-weight: 500;
  color: #fff;
  white-space: nowrap;
}
.num {
  height: 80px;
  margin-top: 35px;
  padding: 15px 23px;
  border: 2px solid #3f3f46;
  border-radius: 18px;
  background: #27272a;
  color: #f6f5f1;
}

/* save bar */
.savebar {
  position: absolute;
  left: 703px;
  bottom: 0;
  width: 1584px;
  height: 116px;
  display: flex;
  align-items: center;
  padding: 0 41px 0 39px;
  border-radius: 24px;
  background: #f6f5f1;
  color: #1a2234;
}
.dot {
  width: 12px;
  height: 12px;
  border-radius: 50%;
  background: #b8794a;
}
.save-text {
  flex: 1;
  margin-left: 21px;
}
.discard {
  width: 169px;
  height: 67px;
  border: 2px solid #f3f2ee;
  border-radius: 14px;
  background: transparent;
  color: #fdfdfc;
  font-weight: 500;
}
.save {
  width: 273px;
  height: 64px;
  margin-left: 16px;
  border-radius: 12px;
  background: #b8794a;
  color: #fff;
  font-weight: 600;
}

/* template previews */
.pv {
  height: 490px;
  position: relative;
  overflow: hidden;
  background: #27272a;
  font-size: 6.4px;
  line-height: 9.4px;
  color: #1d2940;
}
.pv p {
  white-space: nowrap;
}
.pv-if {
  height: 9px;
  padding-left: 5px;
  line-height: 10px;
  color: #16161a;
}
.pv-cancel {
  height: 19px;
  margin-top: 2px;
  line-height: 16px;
  text-align: center;
  border: 1px solid #b91c1c;
  border-radius: 1px;
  background: #fee2e2;
  color: #b91c1c;
  font-size: 6.6px;
  font-weight: 700;
  letter-spacing: 0.3px;
  white-space: nowrap;
  overflow: hidden;
}
.wm {
  position: absolute;
  left: 50%;
  top: 50%;
  transform: translate(-50%, -50%) rotate(-32deg);
  white-space: nowrap;
  font-size: 68px;
  font-weight: 700;
  line-height: 80px;
  color: rgba(220, 38, 38, 0.2);
  pointer-events: none;
}
.broken {
  display: inline-block;
  width: 8px;
  height: 8px;
  vertical-align: -1px;
  border-radius: 1px;
  background: linear-gradient(135deg, #dfe7f5 45%, #4e8fe8 46%, #68bb6b 75%);
}
.bonus {
  display: inline-block;
  padding: 0 3px;
  line-height: 7.5px;
  border-radius: 1px;
  background: #d1fae5;
  color: #15803d;
  font-size: 4.8px;
  font-style: normal;
  font-weight: 700;
  letter-spacing: 0.2px;
}
.grey {
  color: #8a8a90;
}
.orange {
  color: #d97706;
}
.mono {
  font-family: "Liberation Mono", monospace;
  color: #77777c;
  font-size: 5.5px;
  line-height: 8.4px;
}

/* modern */
.pv-modern .m-head {
  height: 143px;
  display: flex;
  justify-content: space-between;
  padding: 6px 5px 0;
}
.m-left {
  flex: none;
  width: 88px;
}
.m-logo {
  margin-top: 6px;
  margin-bottom: 4px;
}
.m-company {
  font-size: 16px;
  font-weight: 700;
  line-height: 20px;
  margin-bottom: 3px;
}
.m-right {
  flex: none;
  width: 250px;
  padding-top: 20px;
  text-align: right;
}
.m-title {
  font-size: 18px;
  font-weight: 700;
  line-height: 22px;
}
.m-custom {
  color: #6b7280;
  font-size: 8px;
  line-height: 11px;
}
.m-info {
  display: flex;
  justify-content: space-between;
  margin-top: 4px;
}
.m-lines {
  width: 150px;
}
.m-qr {
  text-align: left;
}
.m-box {
  height: 127px;
  margin: 0 5px;
  padding: 6px;
  display: flex;
  justify-content: space-between;
  border-radius: 3px;
  background: #fbfbfd;
  color: #4b4b52;
  line-height: 9.8px;
}
.m-billto {
  font-size: 7.5px;
  font-weight: 700;
  line-height: 11px;
  color: #333;
}
.m-name {
  font-weight: 700;
  margin: 3px 0;
  color: #333;
}
.m-gap {
  margin-top: 2px;
}
.m-box-right {
  text-align: right;
}
.m-box-right b {
  color: #333;
}
.m-each {
  margin: 8px 0 0 5px;
}
.m-th {
  display: grid;
  grid-template-columns: 132px 36px 84px 73px;
  margin: 4px 0 0 11px;
  color: #f5f5f5;
  font-weight: 700;
}
.m-th span:nth-child(n + 3) {
  text-align: right;
}
.m-row {
  display: grid;
  grid-template-columns: 118px 60px 84px 73px;
  margin: 8px 0 0 11px;
}
.m-vgap {
  margin-top: 2px;
}
.m-prod .grey {
  color: #77777c;
}
.m-qty {
  padding-top: 30px;
  text-align: center;
}
.m-qty .dk {
  color: #1d2940;
}
.m-cur {
  padding-top: 38px;
  text-align: right;
}
.m-rule {
  height: 1px;
  margin: 3px 5px 0;
  background: #77777c;
}
.m-each2 {
  margin: 4px 0 0 5px;
}
.m-returned {
  margin-left: 5px;
  color: #d97706;
  font-size: 7.5px;
  font-weight: 700;
  line-height: 11px;
}

/* classic */
.pv-classic {
  font-family: "Liberation Serif", serif;
  font-size: 6.6px;
  color: #101014;
}
.pv-classic .wm {
  font-family: "Liberation Serif", serif;
  color: rgba(185, 28, 28, 0.24);
  font-size: 72px;
}
.pv-classic .pv-if {
  padding-left: 3px;
  color: #0e0e10;
}
.pv-classic .pv-cancel {
  border-width: 1px 0;
  border-radius: 0;
  font-size: 7px;
  letter-spacing: 0.5px;
  line-height: 17px;
}
.c-endif {
  padding-top: 6px;
}
.c-frame {
  height: 445px;
  border: 1px solid #0e0e10;
  border-bottom: 0;
  border-right: 0;
}
.c-top {
  padding-top: 7px;
  text-align: center;
}
.c-top p {
  line-height: 9.6px;
}
.c-top .c-company {
  font-size: 22.5px;
  font-weight: 700;
  line-height: 22px;
  margin: 4px 0 1px;
  color: #060608;
}
.c-top .c-title {
  font-size: 14px;
  letter-spacing: 1px;
  line-height: 16px;
  margin: 9px 0 3px;
  color: #0a0a0c;
}
.c-top .c-custom {
  margin-top: 2px;
  font-size: 7.5px;
  font-style: italic;
  letter-spacing: 0.5px;
  color: #5e5e64;
}
.c-hr {
  height: 1px;
  margin: 7px 8px 0;
  background: #0e0e10;
}
.c-boxes {
  display: flex;
  gap: 8px;
  margin: 9px 0 0 7px;
}
.c-box {
  height: 189px;
  border: 1px solid #0e0e10;
  padding: 8px 7px;
}
.c-info {
  width: 247px;
  display: flex;
  justify-content: space-between;
}
.c-bill {
  width: 83px;
}
.c-bill p {
  line-height: 9.8px;
}
.c-h {
  margin-bottom: 4px;
  font-size: 7.5px;
  font-weight: 700;
  letter-spacing: 0.5px;
}
.c-kv {
  display: flex;
  margin-bottom: 2px;
}
.c-kv b {
  width: 52px;
  flex: none;
}
.c-sp {
  margin-top: 1px;
}
.c-info-r {
  padding-right: 1px;
}
.c-each {
  margin: 9px 0 0 7px;
}
.c-table {
  margin: 1px 0 0 7px;
  width: 330px;
}
.c-th {
  height: 21px;
  display: grid;
  grid-template-columns: 117px 72px 67px 70px;
  align-items: center;
  padding: 0 2px 0 5px;
  border: 1px solid #0e0e10;
  background: #f4f4f4;
  color: #111;
  font-weight: 700;
  letter-spacing: 0.3px;
}
.c-th span:nth-child(n + 3) {
  text-align: right;
  padding-right: 3px;
}
.c-td {
  display: grid;
  grid-template-columns: 117px 72px 67px 70px;
  padding: 4px 5px 0;
  border-left: 1px solid #0e0e10;
  border-right: 1px solid #0e0e10;
  height: 80px;
}
.c-q {
  text-align: center;
  padding-top: 23px;
}
.c-p {
  text-align: right;
  padding-top: 32px;
}

/* minimal */
.pv-minimal {
  color: #141417;
}
.n-endif {
  padding-top: 6px;
}
.n-head {
  height: 191px;
  display: flex;
  padding: 4px 5px 0;
}
.n-left {
  width: 120px;
}
.n-company {
  font-size: 12.5px;
  font-weight: 500;
  line-height: 18px;
  margin: 5px 0 3px;
  color: #0e0e10;
}
.n-kv {
  font-size: 4.8px;
  color: #c8c8cc;
}
.blk {
  color: #060608;
}
.n-mid {
  width: 99px;
  padding-top: 4px;
  text-align: right;
}
.n-title {
  font-size: 16.5px;
  line-height: 20px;
  color: #0c0c0e;
}
.n-cif {
  margin-top: 3px;
}
.n-custom {
  margin-top: -4px;
  color: #c5c5ca;
  font-weight: 600;
}
.n-cend {
  margin-top: 2px;
}
.n-qr {
  flex: 1;
  text-align: right;
}
.n-each {
  margin-left: 5px;
}
.n-th {
  display: grid;
  grid-template-columns: 113px 62px 92px 70px;
  height: 16px;
  align-items: center;
  margin: 4px 5px 0;
  border-bottom: 1px solid #08080a;
  font-weight: 700;
}
.n-th span:nth-child(n + 3) {
  text-align: right;
}
.n-row {
  display: grid;
  grid-template-columns: 107px 80px 80px 70px;
  margin: 6px 5px 0;
}
.n-grey {
  color: #7f7f85;
  font-size: 5.6px;
}
.n-q {
  padding-top: 17px;
  text-align: center;
}
.n-p {
  padding-top: 26px;
  text-align: right;
}
.n-rule {
  height: 1px;
  margin: 4px 5px 0;
  background: #77777c;
}
.n-if {
  margin: 0 0 0 5px;
}
.n-returned {
  margin: 4px 0 3px 5px;
  color: #d97706;
  font-size: 7.5px;
  font-weight: 700;
  line-height: 11px;
}
.n-if2 {
  margin-left: 5px;
}
.n-th2 {
  grid-template-columns: 63px 53px 71px 150px;
}
.n-th2 span:nth-child(3) {
  text-align: left;
}
.n-rrow {
  display: grid;
  grid-template-columns: 61px 44px 70px 162px;
  margin: 7px 5px 0;
}
.n-rrow span:last-child {
  text-align: right;
}
.n-rule2 {
  margin-top: 6px;
}
.n-foot {
  display: flex;
  justify-content: space-between;
  margin: 1px 5px 0;
}
.n-totals {
  width: 112px;
  padding-top: 9px;
}
.n-totals p {
  display: flex;
  justify-content: space-between;
  margin-bottom: 7px;
}

/* compact */
.pv-compact {
  font-family: "Liberation Sans", sans-serif;
  font-size: 5.6px;
  line-height: 7.2px;
  color: #0e0e11;
}
.pv-compact .wm {
  font-family: "Liberation Sans", sans-serif;
}
.k-if {
  height: 9px;
  padding-left: 5px;
  line-height: 7px;
}
.pv-compact .pv-cancel {
  height: 17px;
  margin-top: 0;
  border-width: 1px 0;
  border-radius: 0;
  font-family: "Liberation Sans", sans-serif;
  font-size: 6.3px;
  line-height: 14px;
  letter-spacing: 0.5px;
}
.k-endif {
  margin-top: 5px;
}
.k-head {
  height: 74px;
  display: flex;
  justify-content: space-between;
}
.k-head > div:first-child {
  padding-top: 13px;
}
.k-company {
  font-size: 11.5px;
  font-weight: 700;
  line-height: 14px;
  margin: 1px 0 2px;
}
.k-sm {
  font-size: 5px;
  color: #77777c;
}
.k-right {
  text-align: right;
}
.k-title {
  font-size: 13.5px;
  font-weight: 700;
  line-height: 16px;
}
.k-custom {
  font-size: 6px;
  font-weight: 700;
  color: #3a3a40;
}
.k-info {
  display: flex;
  justify-content: flex-end;
  align-items: center;
  gap: 4px;
  margin-top: 2px;
}
.k-lines p {
  line-height: 7px;
}
.k-hr {
  height: 1px;
  background: #333337;
}
.k-bill {
  display: flex;
  justify-content: space-between;
  margin-top: 7px;
}
.k-bill-r {
  text-align: right;
}
.k-each {
  margin-top: 8px;
}
.k-table {
  margin-top: 1px;
}
.k-th,
.k-td {
  display: grid;
  grid-template-columns: 28px 139px 56px 59px 1fr;
}
.k-th {
  height: 14px;
  align-items: center;
  background: #2f2f32;
  color: #ececee;
  font-weight: 700;
}
.k-td {
  height: 64px;
  border-bottom: 1px solid #9a9a9e;
  border-left: 1px solid #8a8a8e;
}
.k-td > span {
  padding: 3px 2px;
  border-right: 1px solid #8a8a8e;
  min-height: 63px;
}
.k-td em {
  font-style: normal;
}
.k-td .bonus {
  font-size: 4.5px;
  line-height: 6px;
}
.k-td > span:last-child {
  border-right: 0;
}
.ctr {
  text-align: center;
}
.rgt {
  text-align: right;
  padding-right: 2px;
}
.k-strong {
  font-weight: 700;
  color: #0c0c0e;
}
.k-returned {
  margin-top: 5px;
  color: #d97706;
  font-weight: 700;
  font-size: 6px;
}
.k-ret-each {
  margin-top: 3px;
}
.k-rth {
  height: 11px;
  margin-top: 1px;
  display: grid;
  grid-template-columns: 89px 1fr auto;
  align-items: center;
  padding: 0 1px;
  background: #fff7ed;
  color: #111;
  font-weight: 700;
}
.k-rtd {
  display: grid;
  grid-template-columns: 86px 60px 1fr;
  margin-top: 3px;
  padding: 0 1px;
}
.k-rtd span:last-child {
  text-align: right;
}
.k-end {
  margin-top: 2px;
}
.k-foot {
  height: 142px;
  display: flex;
  justify-content: space-between;
  margin-top: 2px;
}
.k-notes {
  padding-top: 10px;
}
.k-totals {
  width: 124px;
  margin-top: 10px;
  font-size: 5.6px;
}
.k-tr {
  display: grid;
  grid-template-columns: 50px 1fr;
  align-items: center;
  min-height: 13px;
  text-align: right;
  padding-right: 4px;
}
.k-tr span {
  padding-right: 4px;
  color: #4a4a50;
}
.k-tr b {
  color: #0e0e10;
}
.k-tr b.orange {
  color: #d97706;
}
.k-big {
  min-height: 27px;
  margin: 5px 0;
}
.k-big span {
  height: 27px;
  line-height: 27px;
  background: #2f2f32;
  color: #4c4c52;
  font-size: 7px;
}
.k-big b {
  color: #f4f4f5;
  font-size: 7px;
  line-height: 9px;
}
.k-pay-if {
  margin-top: 2px;
}
.k-pay {
  height: 24px;
  margin-top: 3px;
  display: flex;
  justify-content: space-between;
  padding: 3px 2px;
  background: #f5f5f5;
  color: #222;
  line-height: 9px;
}
```
